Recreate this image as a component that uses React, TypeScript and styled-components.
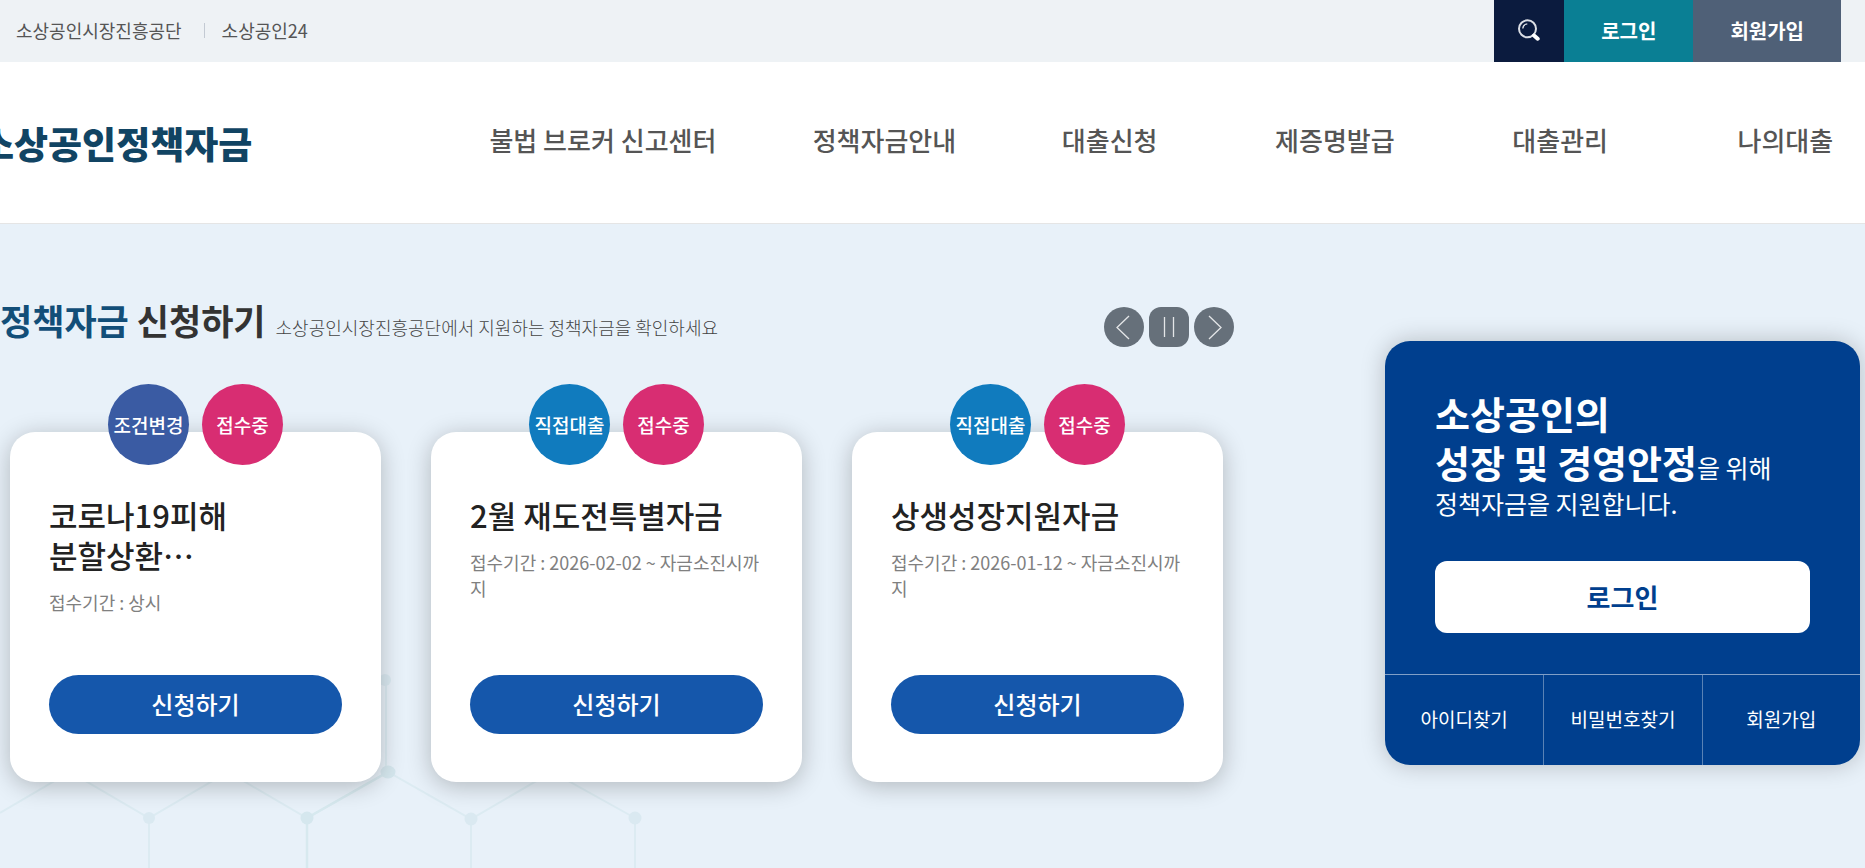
import React from "react";
import styled, { createGlobalStyle } from "styled-components";

const GlobalStyle = createGlobalStyle`
  *, *::before, *::after { box-sizing: border-box; }
  body {
    margin: 0;
    overflow: hidden;
    background: #e8f1f9;
    color: #555;
    font-family: "Noto Sans CJK KR", "Noto Sans", sans-serif;
    font-size: 18px;
  }
  h1, h2, h3, p, ul { margin: 0; padding: 0; }
  ul { list-style: none; }
  a { color: inherit; text-decoration: none; }
  button { border: 0; padding: 0; font-family: inherit; cursor: pointer; }
`;

const Page = styled.div`
  display: flex;
  flex-direction: column;
  min-height: 100vh;
`;

const UtilityBar = styled.div`
  display: flex;
  justify-content: space-between;
  height: 62px;
  padding: 0 24px 0 16px;
  background: #eef2f5;
`;

const SiteLinks = styled.ul`
  display: flex;
  align-items: center;
  padding-bottom: 2px;

  li + li {
    display: flex;
    align-items: center;
  }
  li + li::before {
    content: "";
    width: 1px;
    height: 15px;
    margin: 0 17px 0 22px;
    background: #c3cad3;
  }
`;

const UtilityActions = styled.div`
  display: flex;
`;

const UtilityButton = styled.button<{ $bg: string; $pad: number }>`
  display: flex;
  align-items: center;
  justify-content: center;
  height: 62px;
  padding: 0 ${(p) => p.$pad}px 2px;
  background: ${(p) => p.$bg};
  color: #fff;
  font-size: 20px;
  font-weight: 700;
`;

const Header = styled.header`
  display: flex;
  align-items: center;
  height: 162px;
  margin: 0 -33px 0 -20px;
  border-bottom: 1px solid #e5e5e5;
  background: #fff;
`;

const Logo = styled.a`
  flex: 0 0 454px;
  color: #114463;
  font-size: 37px;
  font-weight: 900;
  line-height: 40px;
  white-space: nowrap;
`;

const MainNav = styled.ul`
  display: grid;
  flex: 1;
  grid-template-columns: 3fr repeat(5, 2fr);
  padding-bottom: 6px;
  color: #555;
  font-size: 26px;
  font-weight: 500;
  line-height: 40px;
  text-align: center;
  white-space: nowrap;
`;

const Hero = styled.main`
  position: relative;
  display: flex;
  flex: 1;
  align-items: flex-start;
  gap: 151px;
  padding: 77px 5px 86px 0;
  background: #e8f1f9;
`;

const HexPattern = styled.svg`
  position: absolute;
  left: 0;
  bottom: 0;
`;

const Funds = styled.section`
  position: relative;
  flex: 1;
  min-width: 0;
`;

const FundsHead = styled.div`
  display: flex;
  align-items: center;
  justify-content: space-between;
  height: 52px;
`;

const FundsTitle = styled.div`
  display: flex;
  align-items: baseline;
  gap: 10px;
  padding-bottom: 14px;
  white-space: nowrap;

  h2 {
    color: #333;
    font-size: 35px;
    font-weight: 700;
    line-height: 52px;
  }
  em {
    color: #124e78;
    font-style: normal;
  }
  p {
    color: #444;
    font-weight: 300;
  }
`;

const Controls = styled.div`
  display: flex;
  gap: 5px;
`;

const ControlButton = styled.button<{ $radius: number }>`
  display: flex;
  align-items: center;
  justify-content: center;
  width: 40px;
  height: 40px;
  border-radius: ${(p) => p.$radius}px;
  background: #66707a;
`;

const CardList = styled.ul`
  display: grid;
  grid-template-columns: repeat(3, 1fr);
  gap: 50px;
  padding: 79px 11px 0 10px;
`;

const Card = styled.li`
  position: relative;
  display: flex;
  flex-direction: column;
  min-height: 350px;
  padding: 63px 39px 48px;
  border-radius: 25px;
  background: #fff;
  box-shadow: 0 4px 25px rgba(0, 0, 0, 0.24);

  h3 {
    color: #222;
    font-size: 31px;
    font-weight: 500;
    line-height: 40px;
    word-break: keep-all;
  }
  p {
    margin-top: 14px;
    color: #808080;
    line-height: 26px;
  }
`;

const Badges = styled.div`
  position: absolute;
  top: -48px;
  left: 0;
  right: 0;
  display: flex;
  justify-content: center;
  gap: 13px;
`;

const Badge = styled.span<{ $bg: string }>`
  display: flex;
  align-items: center;
  justify-content: center;
  width: 81px;
  height: 81px;
  border-radius: 50%;
  background: ${(p) => p.$bg};
  color: #fff;
  font-size: 19px;
  font-weight: 500;
`;

const ApplyButton = styled.button`
  height: 59px;
  margin-top: auto;
  padding-bottom: 2px;
  border-radius: 30px;
  background: #1557ab;
  color: #fff;
  font-size: 24px;
  font-weight: 500;
`;

const LoginPanel = styled.aside`
  position: relative;
  flex: 0 0 475px;
  margin-top: 40px;
  border-radius: 25px;
  background: #003f8e;
  box-shadow: 0 0 25px rgba(0, 0, 0, 0.22);
  color: #fff;
`;

const LoginBody = styled.div`
  padding: 47px 50px 41px;

  p {
    font-size: 25px;
    line-height: 34px;
  }
  strong {
    font-size: 38px;
    font-weight: 700;
    line-height: 49px;
  }
`;

const LoginButton = styled.button`
  width: 100%;
  height: 72px;
  margin-top: 41px;
  padding-bottom: 2px;
  border-radius: 12px;
  background: #fff;
  color: #003f8e;
  font-size: 26px;
  font-weight: 700;
`;

const LoginLinks = styled.ul`
  display: grid;
  grid-template-columns: repeat(3, 1fr);
  border-top: 1px solid rgba(255, 255, 255, 0.5);
  font-size: 19px;
  line-height: 88px;
  text-align: center;

  li {
    padding-bottom: 2px;
  }
  li + li {
    border-left: 1px solid rgba(255, 255, 255, 0.35);
  }
`;

const NAV = ["불법 브로커 신고센터", "정책자금안내", "대출신청", "제증명발급", "대출관리", "나의대출"];

const FUNDS = [
  { kind: "조건변경", color: "#3a5ba3", title: "코로나19피해 분할상환…", period: "상시" },
  { kind: "직접대출", color: "#107bbe", title: "2월 재도전특별자금", period: "2026-02-02 ~ 자금소진시까지" },
  { kind: "직접대출", color: "#107bbe", title: "상생성장지원자금", period: "2026-01-12 ~ 자금소진시까지" },
];

function SearchIcon() {
  return (
    <svg width="22" height="22" viewBox="0 0 22 22" fill="none" stroke="#dcdfe5" aria-hidden="true">
      <circle cx="9.500" cy="9.800" r="8.500" strokeWidth="2" />
      <path d="M4.800 9.500A5 5 0 0 1 9.300 4.900" strokeWidth="1.400" />
      <path d="M16 16.500l3.700 3.200" stroke="#fff" strokeWidth="4" strokeLinecap="round" />
    </svg>
  );
}

function ControlIcon({ d }: { d: string }) {
  return (
    <svg width="40" height="40" viewBox="0 0 40 40" fill="none" stroke="#e4e6e8" strokeWidth="1.3" aria-hidden="true">
      <path d={d} />
    </svg>
  );
}

export default function App() {
  return (
    <>
      <GlobalStyle />
      <Page>
        <UtilityBar>
          <SiteLinks>
            <li><a href="#semas">소상공인시장진흥공단</a></li>
            <li><a href="#sbiz24">소상공인24</a></li>
          </SiteLinks>
          <UtilityActions>
            <UtilityButton type="button" $bg="#0b1b3e" $pad={24} aria-label="검색">
              <SearchIcon />
            </UtilityButton>
            <UtilityButton type="button" $bg="#0a7f94" $pad={37}>로그인</UtilityButton>
            <UtilityButton type="button" $bg="#4f6077" $pad={37}>회원가입</UtilityButton>
          </UtilityActions>
        </UtilityBar>

        <Header>
          <Logo href="#home">소상공인정책자금</Logo>
          <MainNav>
            {NAV.map((label) => (
              <li key={label}><a href="#menu">{label}</a></li>
            ))}
          </MainNav>
        </Header>

        <Hero>
          <HexPattern width="660" height="200" viewBox="0 668 660 200" fill="none" stroke="#dcebf2" strokeWidth="2" aria-hidden="true">
            <path d="M0 813L70 772L149 818L228 772L307 818L388 772L471 819L552 772L635 818M149 818V868M471 819V868M635 818V868M386 680V772" />
            <path d="M388 772L307 818V868" stroke="#d7e9ef" strokeWidth="2.500" />
            <g fill="#dae9f1" stroke="none">
              <circle cx="149" cy="818" r="6" />
              <circle cx="307" cy="818" r="6.500" fill="#d5e7ee" />
              <circle cx="471" cy="819" r="6.500" />
              <circle cx="635" cy="818" r="6.500" />
              <ellipse cx="388" cy="772" rx="7.500" ry="6.500" fill="#d5e7ee" />
              <circle cx="385" cy="680" r="6" />
            </g>
          </HexPattern>

          <Funds>
            <FundsHead>
              <FundsTitle>
                <h2><em>정책자금</em> 신청하기</h2>
                <p>소상공인시장진흥공단에서 지원하는 정책자금을 확인하세요</p>
              </FundsTitle>
              <Controls>
                <ControlButton type="button" $radius={20} aria-label="이전">
                  <ControlIcon d="M25 9L13 20.500L25 32" />
                </ControlButton>
                <ControlButton type="button" $radius={12} aria-label="정지">
                  <ControlIcon d="M15.500 10V30M24.500 10V30" />
                </ControlButton>
                <ControlButton type="button" $radius={20} aria-label="다음">
                  <ControlIcon d="M15 9L27 20.500L15 32" />
                </ControlButton>
              </Controls>
            </FundsHead>

            <CardList>
              {FUNDS.map((fund) => (
                <Card key={fund.title}>
                  <Badges>
                    <Badge $bg={fund.color}>{fund.kind}</Badge>
                    <Badge $bg="#d82d72">접수중</Badge>
                  </Badges>
                  <h3>{fund.title}</h3>
                  <p>접수기간 : {fund.period}</p>
                  <ApplyButton type="button">신청하기</ApplyButton>
                </Card>
              ))}
            </CardList>
          </Funds>

          <LoginPanel>
            <LoginBody>
              <p>
                <strong>소상공인의<br />성장 및 경영안정</strong>을 위해<br />
                정책자금을 지원합니다.
              </p>
              <LoginButton type="button">로그인</LoginButton>
            </LoginBody>
            <LoginLinks>
              <li><a href="#find-id">아이디찾기</a></li>
              <li><a href="#find-password">비밀번호찾기</a></li>
              <li><a href="#join">회원가입</a></li>
            </LoginLinks>
          </LoginPanel>
        </Hero>
      </Page>
    </>
  );
}
